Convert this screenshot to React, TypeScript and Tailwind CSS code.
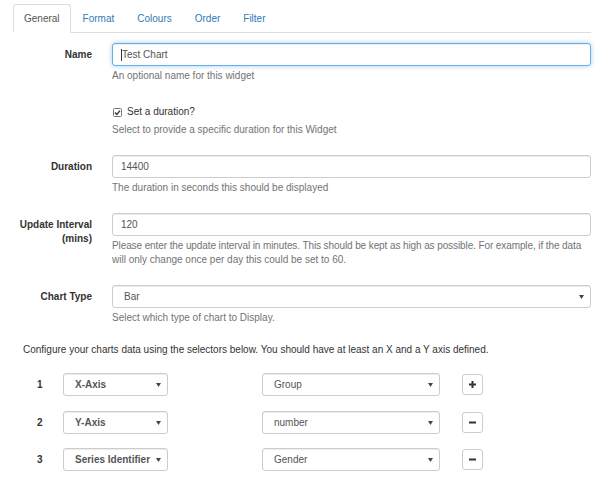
import React from "react";

const Arrow = () => (
  <svg width="5" height="4" viewBox="0 0 5 4" className="absolute top-1/2 -translate-y-1/2" style={{ right: 6 }}>
    <polygon points="0,0 5,0 2.5,4" fill="#444" />
  </svg>
);

function Select({ value, className, bold }: { value: string; className: string; bold?: boolean }) {
  return (
    <div
      className={`relative h-[23px] border border-[#ccc] rounded-[3px] bg-white shadow-[inset_0_1px_1px_rgba(0,0,0,0.075)] flex items-center pl-[11px] text-[#555] ${bold ? "font-bold text-[#333]" : ""} ${className}`}
    >
      <span>{value}</span>
      <Arrow />
    </div>
  );
}

function Label({ children }: { children: React.ReactNode }) {
  return (
    <div className="w-[79px] shrink-0 text-right font-bold text-[#333] pt-[4.5px] leading-[14px]">{children}</div>
  );
}

function Help({ children, mt = "mt-[3px]" }: { children: React.ReactNode; mt?: string }) {
  return <div className={`${mt} text-[#737373] leading-[14px]`}>{children}</div>;
}

function Input({ value, focused }: { value: string; focused?: boolean }) {
  return (
    <div
      className={`h-[23px] rounded-[3px] bg-white flex items-center pl-[8px] text-[#555] border ${
        focused
          ? "border-[#66afe9] shadow-[inset_0_1px_1px_rgba(0,0,0,0.075),0_0_5px_rgba(102,175,233,0.6)]"
          : "border-[#ccc] shadow-[inset_0_1px_1px_rgba(0,0,0,0.075)]"
      }`}
    >
      {focused && <span className="inline-block w-px h-[12px] bg-[#333] mr-[0px]" />}
      <span>{value}</span>
    </div>
  );
}

function PlusMinus({ plus }: { plus?: boolean }) {
  return (
    <div className="ml-[22px] w-[21px] h-[21px] border border-[#ccc] rounded-[3px] bg-white flex items-center justify-center">
      <svg width="7" height="7" viewBox="0 0 7 7">
        <rect x="0" y="2.5" width="7" height="2" fill="#333" />
        {plus && <rect x="2.5" y="0" width="2" height="7" fill="#333" />}
      </svg>
    </div>
  );
}

export default function App() {
  const tabs = ["General", "Format", "Colours", "Order", "Filter"];
  return (
    <div
      className="w-[599px] h-[500px] bg-white text-[10px] text-[#333] overflow-hidden"
      style={{ fontFamily: '"Liberation Sans", Arial, sans-serif' }}
    >
      <div className="ml-[13px] mr-[8px] pt-[4px]">
        <div className="flex border-b border-[#ddd] h-[29px]">
          {tabs.map((t, i) => (
            <div
              key={t}
              className={`h-[29px] px-[10px] flex items-center rounded-t-[3px] border mr-[1px] ${
                i === 0
                  ? "border-[#ddd] border-b-white bg-white text-[#555]"
                  : "border-transparent text-[#337ab7]"
              }`}
            >
              {t}
            </div>
          ))}
        </div>

        {/* Name */}
        <div className="flex mt-[10px]">
          <Label>Name</Label>
          <div className="ml-[20px] flex-1">
            <Input value="Test Chart" focused />
            <Help>An optional name for this widget</Help>
          </div>
        </div>

        {/* checkbox */}
        <div className="flex mt-[22px]">
          <div className="w-[79px] shrink-0" />
          <div className="ml-[20px] flex-1">
            <div className="flex items-center h-[14px] leading-[14px]">
              <div className="w-[9px] h-[9px] ml-[1px] border border-[#767676] rounded-[1.5px] bg-white flex items-center justify-center">
                <svg width="7" height="7" viewBox="0 0 7 7">
                  <polyline points="1,3.6 2.8,5.4 6,1.6" fill="none" stroke="#333" strokeWidth="1.4" />
                </svg>
              </div>
              <span className="ml-[5px]">Set a duration?</span>
            </div>
            <Help mt="mt-[4px]">Select to provide a specific duration for this Widget</Help>
          </div>
        </div>

        {/* Duration */}
        <div className="flex mt-[18px]">
          <Label>Duration</Label>
          <div className="ml-[20px] flex-1">
            <Input value="14400" />
            <Help>The duration in seconds this should be displayed</Help>
          </div>
        </div>

        {/* Update Interval */}
        <div className="flex mt-[18px]">
          <Label>
            Update Interval
            <br />
            (mins)
          </Label>
          <div className="ml-[20px] flex-1">
            <Input value="120" />
            <Help>
              <span className="whitespace-nowrap tracking-[-0.1px]">
                Please enter the update interval in minutes. This should be kept as high as possible. For example, if the data
              </span>
              <br />
              will only change once per day this could be set to 60.
            </Help>
          </div>
        </div>

        {/* Chart Type */}
        <div className="flex mt-[18px]">
          <Label>Chart Type</Label>
          <div className="ml-[20px] flex-1">
            <Select value="Bar" className="" />
            <Help>Select which type of chart to Display.</Help>
          </div>
        </div>

        <div className="mt-[18px] ml-[10px] leading-[14px]">
          Configure your charts data using the selectors below. You should have at least an X and a Y axis defined.
        </div>

        {[
          { n: "1", a: "X-Axis", b: "Group", plus: true, mt: "mt-[16px]" },
          { n: "2", a: "Y-Axis", b: "number", plus: false, mt: "mt-[15px]" },
          { n: "3", a: "Series Identifier", b: "Gender", plus: false, mt: "mt-[14px]" },
        ].map((r) => (
          <div key={r.n} className={`flex items-center ${r.mt}`}>
            <div className="ml-[24px] w-[26px] font-bold">{r.n}</div>
            <Select value={r.a} bold className="w-[105px]" />
            <Select value={r.b} className="w-[178px] ml-[94px]" />
            <PlusMinus plus={r.plus} />
          </div>
        ))}
      </div>
    </div>
  );
}
